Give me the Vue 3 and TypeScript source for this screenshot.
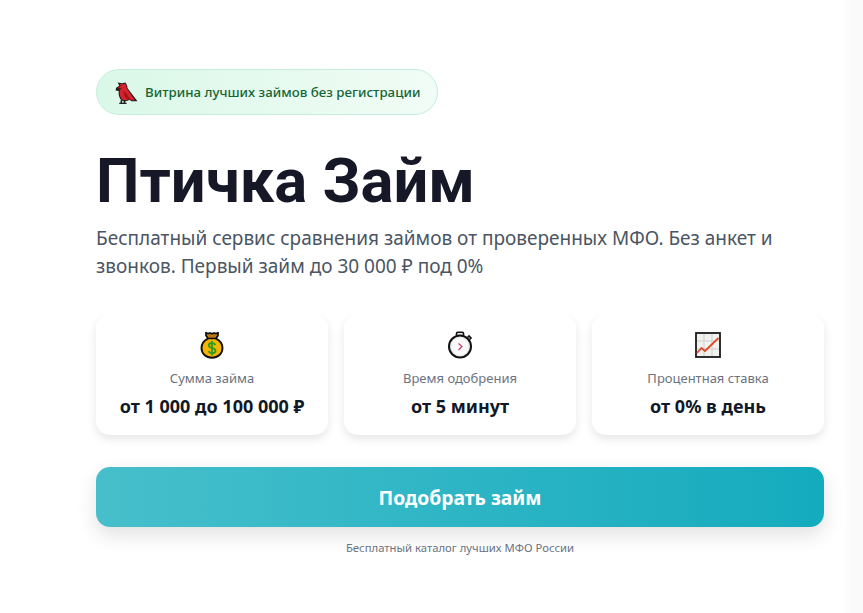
<template>
  <div class="page">
    <main class="hero">
      <div class="badge">
        <svg class="badge__icon" viewBox="0 0 24 24" aria-hidden="true">
          <path d="M8 22v-2.500M11 22v-2.500" stroke="#222" stroke-width="1.600" fill="none" />
          <path d="M6 22.500h3.500M9.500 22.500h3.500" stroke="#222" stroke-width="1.200" fill="none" />
          <path d="M3 7.500 6 5.500 4.500 2.500l4.500.5 3-.5 1.500 2.500.5 3L23.500 20.500h-5.500l-2.500-1.500c-2 1.800-5.500 1.800-7.500.5C6 17.500 5 13.500 5.500 10.500L2.500 10Z" fill="#1c1c1c" />
          <path d="M5 6.800 7.500 5.800 6.200 3.700 9 4l3-.5.800 1.700.5 3 7.800 11.300h-3.500l-2.400-1.500c-2 1.800-5 1.800-6.800.5C6.800 16.500 6 13 6.500 9.500L4.500 9Z" fill="#d6222c" />
          <path d="M4 8.500 6.500 7l1.500 1.500L6 10Z" fill="#3a1c14" />
          <path d="M10 10c2 2 5 5 6 8.500-3 1-6-3-6-8.500Z" fill="#a3141f" />
        </svg>
        <span class="badge__text">Витрина лучших займов без регистрации</span>
      </div>

      <h1 class="title">Птичка Займ</h1>
      <p class="lead">Бесплатный сервис сравнения займов от проверенных МФО. Без анкет и звонков. Первый займ до 30 000 ₽ под 0%</p>

      <section class="stats">
        <div class="stat">
          <svg class="stat__icon" viewBox="0 0 28 28" aria-hidden="true">
            <path d="M8 1.800c1.500 1 2.700 1 3.800.3 1.400.8 3 .8 4.400 0 1.100.7 2.300.7 3.800-.3.300 1.700-.2 3.500-1.500 4.700v1.400c3.800 2 6 5.300 6 9.100 0 5.800-4.500 9.700-10.500 9.700S3.500 22.800 3.500 17c0-3.800 2.200-7.100 6-9.100V6.500C8.200 5.300 7.700 3.500 8 1.800Z" fill="#f5b400" stroke="#111" stroke-width="1.900" stroke-linejoin="round" />
            <path d="M9.500 3.600c1.800.7 7.200.7 9 0-.2 1.400-.6 2.300-1.100 2.900h-6.800c-.5-.6-.9-1.500-1.100-2.900Z" fill="#c5711c" />
            <path d="M9.500 7.400h9" stroke="#111" stroke-width="1.700" />
            <path d="M17.300 14c-.6-1.300-1.900-2-3.300-2-1.900 0-3.200 1-3.200 2.500 0 3.500 6.700 1.700 6.700 5.200 0 1.500-1.500 2.500-3.500 2.500-1.500 0-2.900-.7-3.500-2M14 10v14.500" fill="none" stroke="#2a9d1f" stroke-width="1.800" />
          </svg>
          <span class="stat__label">Сумма займа</span>
          <strong class="stat__value">от 1 000 до 100 000 ₽</strong>
        </div>

        <div class="stat">
          <svg class="stat__icon" viewBox="0 0 28 28" aria-hidden="true">
            <path d="M10.500 5V2.500c0-.8.500-1.200 1.200-1.200h4.600c.7 0 1.200.4 1.200 1.200V5" fill="#e4e4e4" stroke="#111" stroke-width="1.600" />
            <path d="m21.500 6.500 1.500-1.500 2 2-1.500 1.500" fill="#e4e4e4" stroke="#111" stroke-width="1.600" />
            <circle cx="14" cy="15.500" r="11" fill="#ececec" stroke="#111" stroke-width="2" />
            <circle cx="14" cy="15.500" r="8.500" fill="#f9f9f9" />
            <path d="m12.500 12.500 3.500 3-3.500 3.500" fill="none" stroke="#c2355a" stroke-width="1.100" />
          </svg>
          <span class="stat__label">Время одобрения</span>
          <strong class="stat__value">от 5 минут</strong>
        </div>

        <div class="stat">
          <svg class="stat__icon" viewBox="0 0 28 28" aria-hidden="true">
            <rect x="2" y="2" width="24" height="24" fill="#f1f1ef" stroke="#1a1a1a" stroke-width="1.800" />
            <path d="M10 3v22M18 3v22M3 10h22M3 18h22" stroke="#cfcfcb" stroke-width="1" />
            <path d="m3 22 4.500-5 3.500 3L24.500 7" fill="none" stroke="#dd4a2a" stroke-width="1.800" />
          </svg>
          <span class="stat__label">Процентная ставка</span>
          <strong class="stat__value">от 0% в день</strong>
        </div>
      </section>

      <button class="cta" type="button">Подобрать займ</button>
      <p class="note">Бесплатный каталог лучших МФО России</p>
    </main>
  </div>
</template>

<script setup lang="ts">
</script>

<style scoped>
.page {
  box-sizing: border-box;
  height: 613px;
  padding: 69px 0 0 96px;
  overflow: hidden;
  font-family: "Noto Sans", "Open Sans", sans-serif;
  background: linear-gradient(90deg, #fff 0, #fff 843px, #fafafb 851px);
}

.hero {
  width: 728px;
}

.badge {
  box-sizing: border-box;
  display: inline-flex;
  align-items: center;
  gap: 7px;
  height: 46px;
  width: 342px;
  padding: 0 16px;
  border: 1px solid #c4eedf;
  border-radius: 23px;
  background: linear-gradient(90deg, #daf8e8, #f1fcf6);
}

.badge__icon {
  width: 25px;
  height: 25px;
  flex: none;
}

.badge__text {
  font-size: 13.300px;
  font-weight: 500;
  color: #166534;
  white-space: nowrap;
}

.title {
  margin: 30px 0 0;
  font-family: Roboto, "Noto Sans", sans-serif;
  font-size: 61.500px;
  line-height: 72px;
  font-weight: 700;
  color: #161827;
}

.lead {
  margin: 7px 0 0;
  font-size: 19px;
  line-height: 28px;
  color: #4b5563;
}

.stats {
  display: grid;
  grid-template-columns: repeat(3, 1fr);
  gap: 16px;
  margin-top: 35px;
}

.stat {
  display: flex;
  flex-direction: column;
  align-items: center;
  height: 120px;
  box-sizing: border-box;
  padding-top: 16px;
  border-radius: 14px;
  background: #fff;
  box-shadow: 0 4px 10px rgba(0, 0, 0, 0.1);
  clip-path: inset(0 -20px -20px -20px);
}

.stat__icon {
  width: 28px;
  height: 28px;
}

.stat__label {
  margin-top: 10px;
  font-size: 13px;
  line-height: 18px;
  color: #6b7280;
}

.stat__value {
  margin-top: 7px;
  font-size: 18px;
  line-height: 24px;
  font-weight: 700;
  color: #111827;
}

.cta {
  display: block;
  width: 100%;
  height: 60px;
  margin-top: 32px;
  border: 0;
  border-radius: 14px;
  font-family: inherit;
  font-size: 19.300px;
  font-weight: 700;
  color: #fff;
  background: linear-gradient(90deg, #47bfcb, #14abbe);
  box-shadow: 0 8px 20px rgba(0, 0, 0, 0.12);
}

.note {
  margin: 12px 0 0;
  font-size: 11.300px;
  line-height: 18px;
  text-align: center;
  color: #6b7280;
}
</style>
